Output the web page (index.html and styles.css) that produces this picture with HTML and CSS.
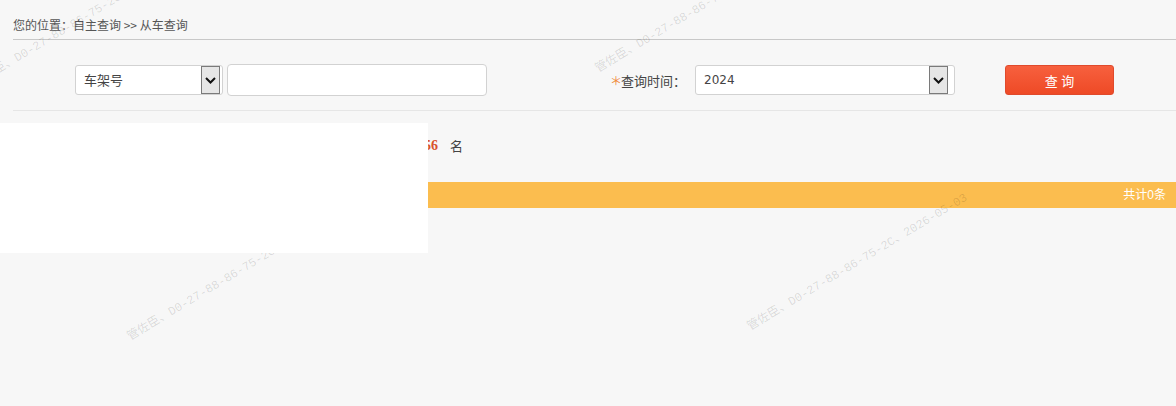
FILE: index.html
```html
<!DOCTYPE html>
<html lang="zh-CN">
<head>
  <meta charset="UTF-8" />
  <title>从车查询</title>
  <link rel="stylesheet" href="styles.css">
</head>
<body>
  <div class="page">
    <div class="crumb">您的位置：自主查询 &gt;&gt; 从车查询</div>

    <div class="search">
      <div class="search-left">
        <div class="select-box sel-type">
          <select>
            <option>车架号</option>
            <option>车牌号</option>
          </select>
          <span class="arrow"><svg width="11" height="7" viewBox="0 0 11 7"><path d="M1 1l4.5 4.5L10 1" fill="none" stroke="#111" stroke-width="2"/></svg></span>
        </div>
        <input class="keyword" type="text" />
      </div>
      <div class="search-right">
        <label class="field-label"><i>＊</i>查询时间：</label>
        <div class="select-box sel-year">
          <select>
            <option>2024</option>
            <option>2023</option>
          </select>
          <span class="arrow"><svg width="11" height="7" viewBox="0 0 11 7"><path d="M1 1l4.5 4.5L10 1" fill="none" stroke="#111" stroke-width="2"/></svg></span>
        </div>
        <button class="btn-query" type="button">查 询</button>
      </div>
    </div>

    <div class="rank">
      <span>您的车辆当前排名：第</span>
      <b>56</b>
      <span>名</span>
    </div>

    <div class="list-bar">共计0条</div>
  </div>

  <!-- masked block and watermark layer -->
  <div class="mask"></div>
  <div class="wm wm1">管佐臣、D0-27-88-86-75-2C、2026-05-03</div>
  <div class="wm wm2">管佐臣、D0-27-88-86-75-2C、2026-05-03</div>
  <div class="wm wm3">管佐臣、D0-27-88-86-75-2C、2026-05-03</div>
  <div class="wm wm4">管佐臣、D0-27-88-86-75-2C、2026-05-03</div>
</body>
</html>
```

FILE: styles.css
```css
* {
  box-sizing: border-box;
}

body {
  margin: 0;
  background: #f7f7f7;
  font-family: "Liberation Sans", "Noto Sans CJK SC", sans-serif;
  font-size: 12px;
  color: #555;
  height: 406px;
  overflow: hidden;
  position: relative;
}

.crumb {
  margin-left: 13px;
  padding-top: 17px;
  height: 40px;
  line-height: 16px;
  border-bottom: 1px solid #c8c8c8;
  color: #555;
  font-family: "Noto Sans CJK SC", sans-serif;
}

.search {
  display: flex;
  align-items: center;
  height: 71px;
  margin-left: 13px;
  padding-top: 10px;
  border-bottom: 1px solid #e6e6e6;
}

.search-left {
  display: flex;
  align-items: center;
  gap: 4px;
  margin-left: 62px;
}

.search-right {
  display: flex;
  align-items: center;
  margin-left: 125px;
}

.select-box {
  display: flex;
  align-items: center;
  height: 30px;
  background: #fff;
  border: 1px solid #d2d2d2;
  border-radius: 3px;
  padding-right: 2px;
}

.select-box select {
  flex: 1;
  -webkit-appearance: none;
  appearance: none;
  border: 0;
  outline: 0;
  background: transparent;
  font-family: inherit;
  font-size: 13px;
  color: #444;
  padding-left: 8px;
  height: 100%;
}

.select-box .arrow {
  width: 19px;
  height: 28px;
  border: 1px solid #7a7a7a;
  background: #e6e6e6;
  display: flex;
  align-items: center;
  justify-content: center;
}

.sel-type {
  width: 148px;
}

.sel-year {
  width: 260px;
  padding-right: 6px;
}

.sel-year select {
  font-family: Tahoma, "DejaVu Sans", sans-serif;
  font-size: 12px;
}

.keyword {
  width: 260px;
  height: 32px;
  border: 1px solid #d2d2d2;
  border-radius: 4px;
  background: #fff;
  outline: 0;
}

.field-label {
  display: flex;
  align-items: center;
  font-size: 13px;
  color: #444;
  margin-right: 9px;
  margin-left: -2px;
}

.field-label i {
  font-style: normal;
  font-family: "Noto Sans CJK SC", sans-serif;
  font-size: 12px;
  color: #f08a3a;
  margin-right: -1px;
}

.btn-query {
  margin-left: 50px;
  width: 109px;
  height: 30px;
  border: 1px solid #e04a2c;
  border-radius: 3px;
  background: linear-gradient(#f7603e, #ee4a26);
  color: #fff;
  font-family: inherit;
  font-size: 13px;
  cursor: pointer;
}

.rank {
  display: flex;
  justify-content: flex-start;
  align-items: center;
  gap: 12px;
  height: 71px;
  padding-bottom: 2px;
  padding-left: 282px;
  font-size: 13px;
  color: #444;
}

.rank b {
  color: #d9532c;
  font-family: "Liberation Serif", serif;
  font-size: 14px;
}

.list-bar {
  height: 26px;
  line-height: 26px;
  background: #fbbd4f;
  color: #fff;
  text-align: right;
  padding-right: 10px;
  font-size: 12px;
}

.mask {
  position: absolute;
  left: 0;
  top: 123px;
  width: 428px;
  height: 130px;
  background: #fff;
  z-index: 2;
}

.wm {
  position: absolute;
  white-space: nowrap;
  font-family: "Liberation Mono", "Noto Sans CJK SC", monospace;
  font-size: 12px;
  color: rgba(0, 0, 0, 0.13);
  transform-origin: left bottom;
  transform: rotate(-31deg);
  pointer-events: none;
  z-index: 1;
}

.wm1 { left: -22px; top: 72px; }
.wm2 { left: 600px; top: 58px; }
.wm3 { left: 132px; top: 326px; }
.wm4 { left: 752px; top: 316px; }
```
